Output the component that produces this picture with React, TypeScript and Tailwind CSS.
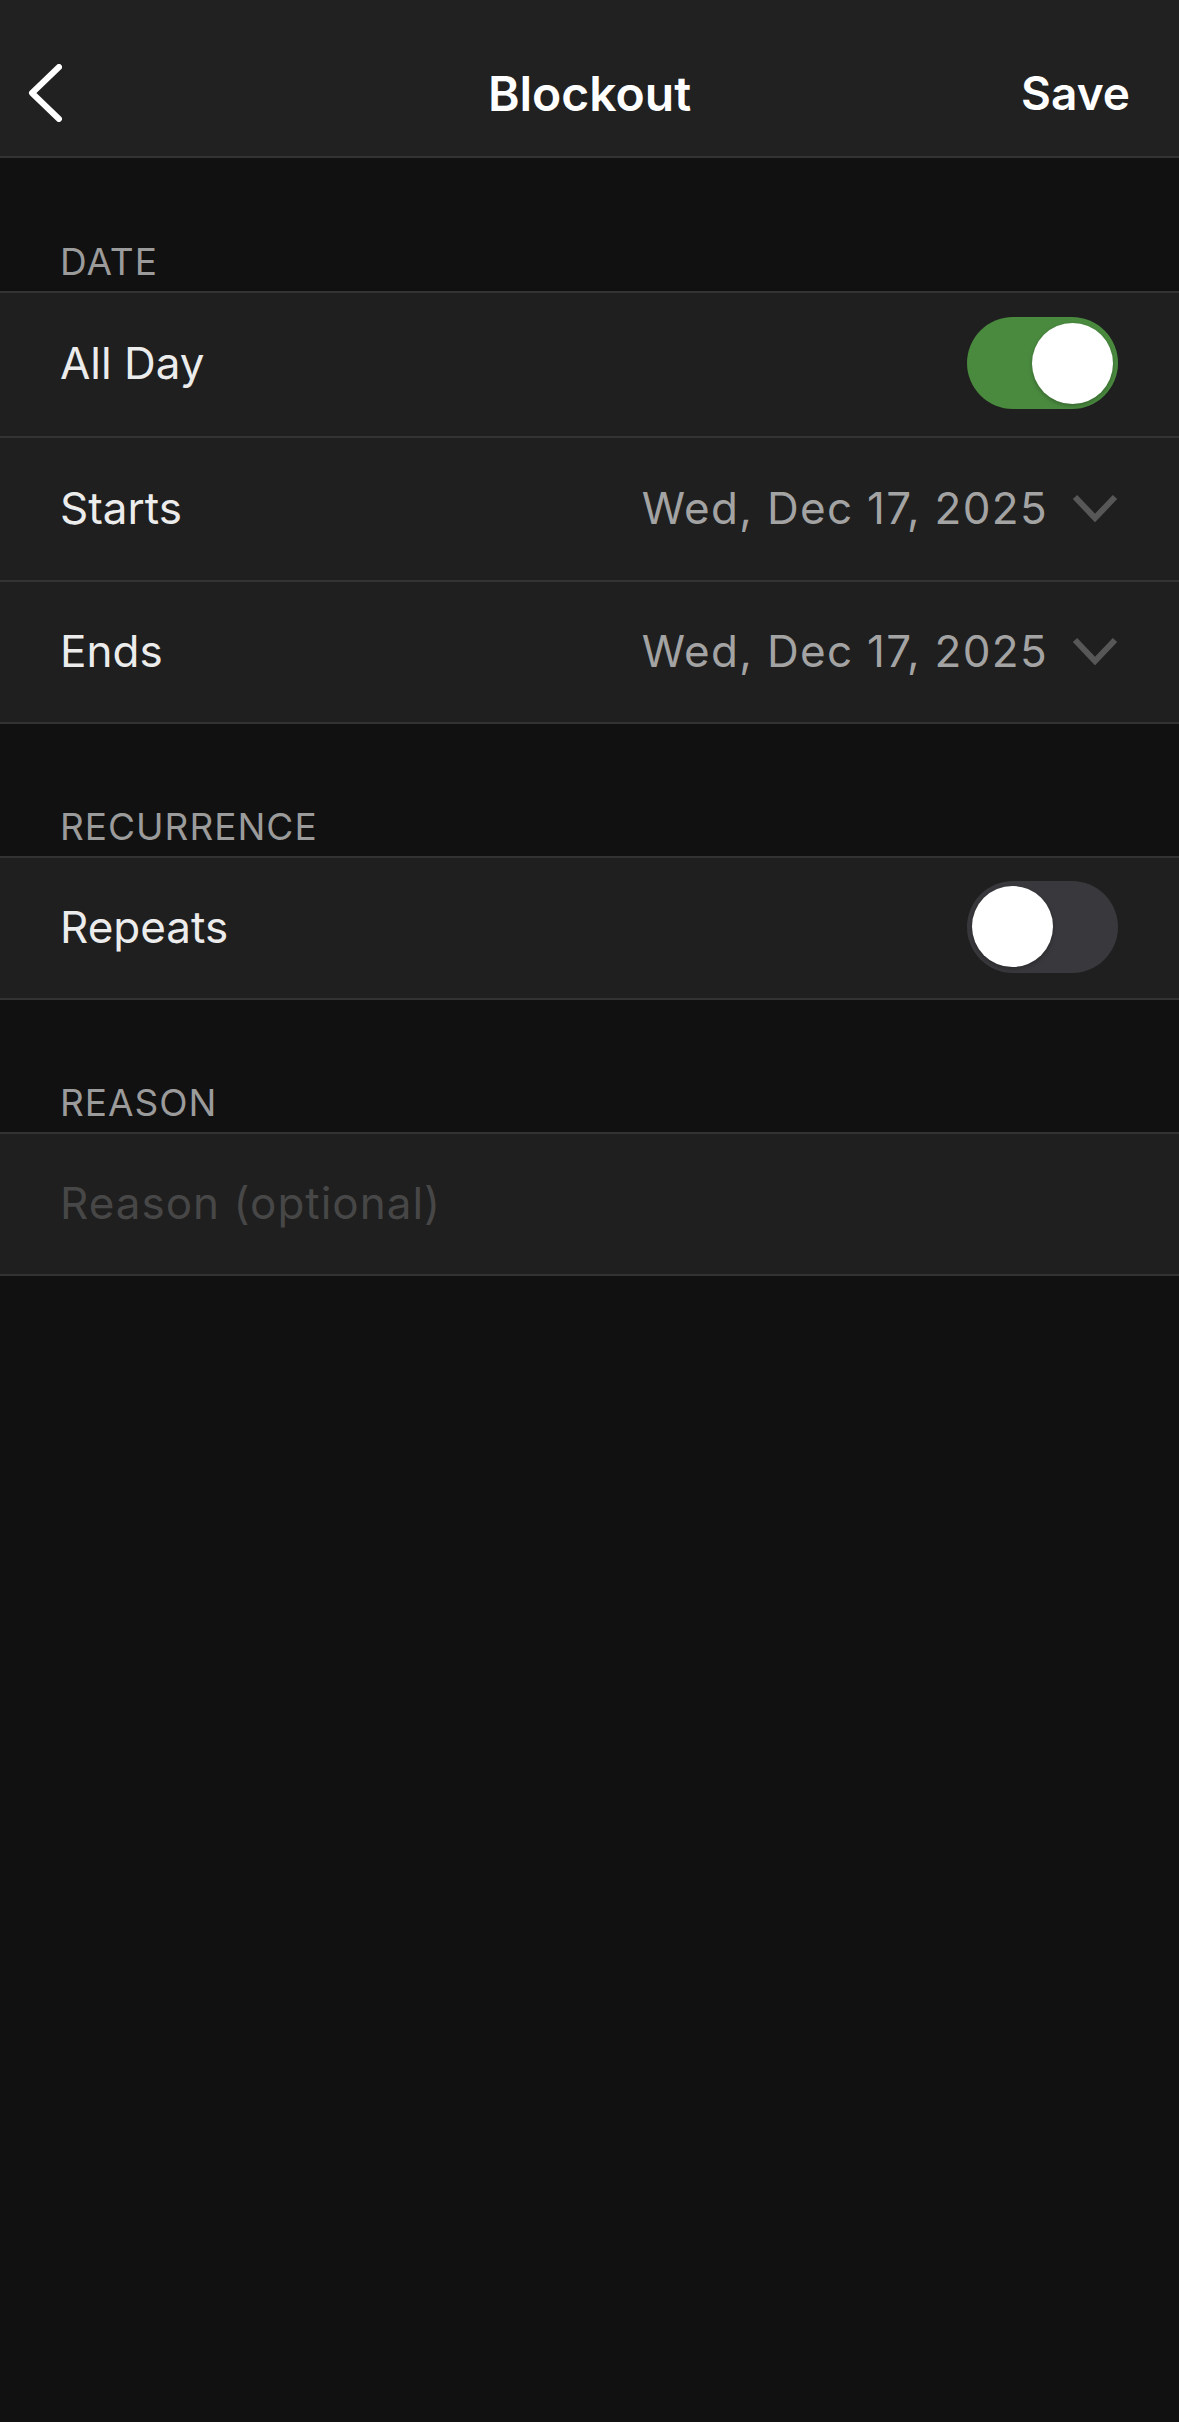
import * as React from "react";

type ToggleProps = { on: boolean };

function Toggle({ on }: ToggleProps) {
  return (
    <div
      className={
        on
          ? "flex h-[92px] w-[151px] items-center justify-end rounded-full bg-[#4a8a3f] px-[5px]"
          : "flex h-[92px] w-[151px] items-center justify-start rounded-full bg-[#39393d] px-[5px]"
      }
    >
      <div className="h-[81px] w-[81px] rounded-full bg-white shadow-[0_2px_4px_rgba(0,0,0,0.25)]" />
    </div>
  );
}

function ChevronDown() {
  return (
    <svg width="46" height="28" viewBox="0 0 46 28" fill="none">
      <polyline
        points="3,3 23,24 43,3"
        stroke="#575757"
        strokeWidth="6"
        strokeLinecap="butt"
        strokeLinejoin="miter"
      />
    </svg>
  );
}

function SectionLabel({
  children,
  first,
}: {
  children: React.ReactNode;
  first?: boolean;
}) {
  return (
    <div
      className={
        first
          ? "flex h-[133px] items-end px-[60px] pb-[11px] text-[37px] leading-none tracking-[1px] text-[#9b9b9b]"
          : "flex h-[132px] items-end px-[60px] pb-[11px] text-[37px] leading-none tracking-[1px] text-[#9b9b9b]"
      }
    >
      {children}
    </div>
  );
}

function Row({
  children,
  className,
}: {
  children: React.ReactNode;
  className: string;
}) {
  return (
    <div
      className={
        "flex items-center justify-between pb-[3px] pl-[60px] pr-[61px] " +
        className
      }
    >
      {children}
    </div>
  );
}

function DateValue({ value }: { value: string }) {
  return (
    <div className="flex items-center gap-[24px]">
      <span className="text-[44px] tracking-[1.3px] text-[#a3a3a3]">{value}</span>
      <ChevronDown />
    </div>
  );
}

export default function App() {
  return (
    <div
      className="min-h-[2422px] w-full bg-[#111111] text-[#ececec]"
      style={{ fontFamily: "Inter, 'Noto Sans', 'Liberation Sans', sans-serif" }}
    >
      {/* header */}
      <header className="relative flex h-[158px] items-center justify-between border-b-2 border-[#333333] bg-[#212121] pl-[28px] pr-[49px] pt-[30px]">
        <svg width="34" height="58" viewBox="0 0 34 58" fill="none">
          <polyline
            points="31,3 4,29 31,55"
            stroke="#ffffff"
            strokeWidth="6"
            strokeLinecap="round"
            strokeLinejoin="round"
          />
        </svg>
        <div className="absolute left-0 right-0 top-[30px] flex h-[128px] items-center justify-center">
          <span className="text-[48px] font-semibold text-white">Blockout</span>
        </div>
        <span className="text-[46px] font-semibold text-white">Save</span>
      </header>

      {/* date */}
      <SectionLabel first>DATE</SectionLabel>
      <div className="border-y-2 border-[#333333] bg-[#1f1f1f]">
        <Row className="h-[145px] border-b-2 border-[#333333]">
          <span className="text-[44px]">All Day</span>
          <Toggle on />
        </Row>
        <Row className="h-[144px] border-b-2 border-[#333333]">
          <span className="text-[44px]">Starts</span>
          <DateValue value="Wed, Dec 17, 2025" />
        </Row>
        <Row className="h-[140px]">
          <span className="text-[44px]">Ends</span>
          <DateValue value="Wed, Dec 17, 2025" />
        </Row>
      </div>

      {/* recurrence */}
      <SectionLabel>RECURRENCE</SectionLabel>
      <div className="border-y-2 border-[#333333] bg-[#1f1f1f]">
        <Row className="h-[140px]">
          <span className="text-[44px]">Repeats</span>
          <Toggle on={false} />
        </Row>
      </div>

      {/* reason */}
      <SectionLabel>REASON</SectionLabel>
      <div className="border-y-2 border-[#333333] bg-[#1f1f1f]">
        <Row className="h-[140px]">
          <span className="text-[44px] tracking-[1px] text-[#474747]">Reason (optional)</span>
        </Row>
      </div>
    </div>
  );
}
